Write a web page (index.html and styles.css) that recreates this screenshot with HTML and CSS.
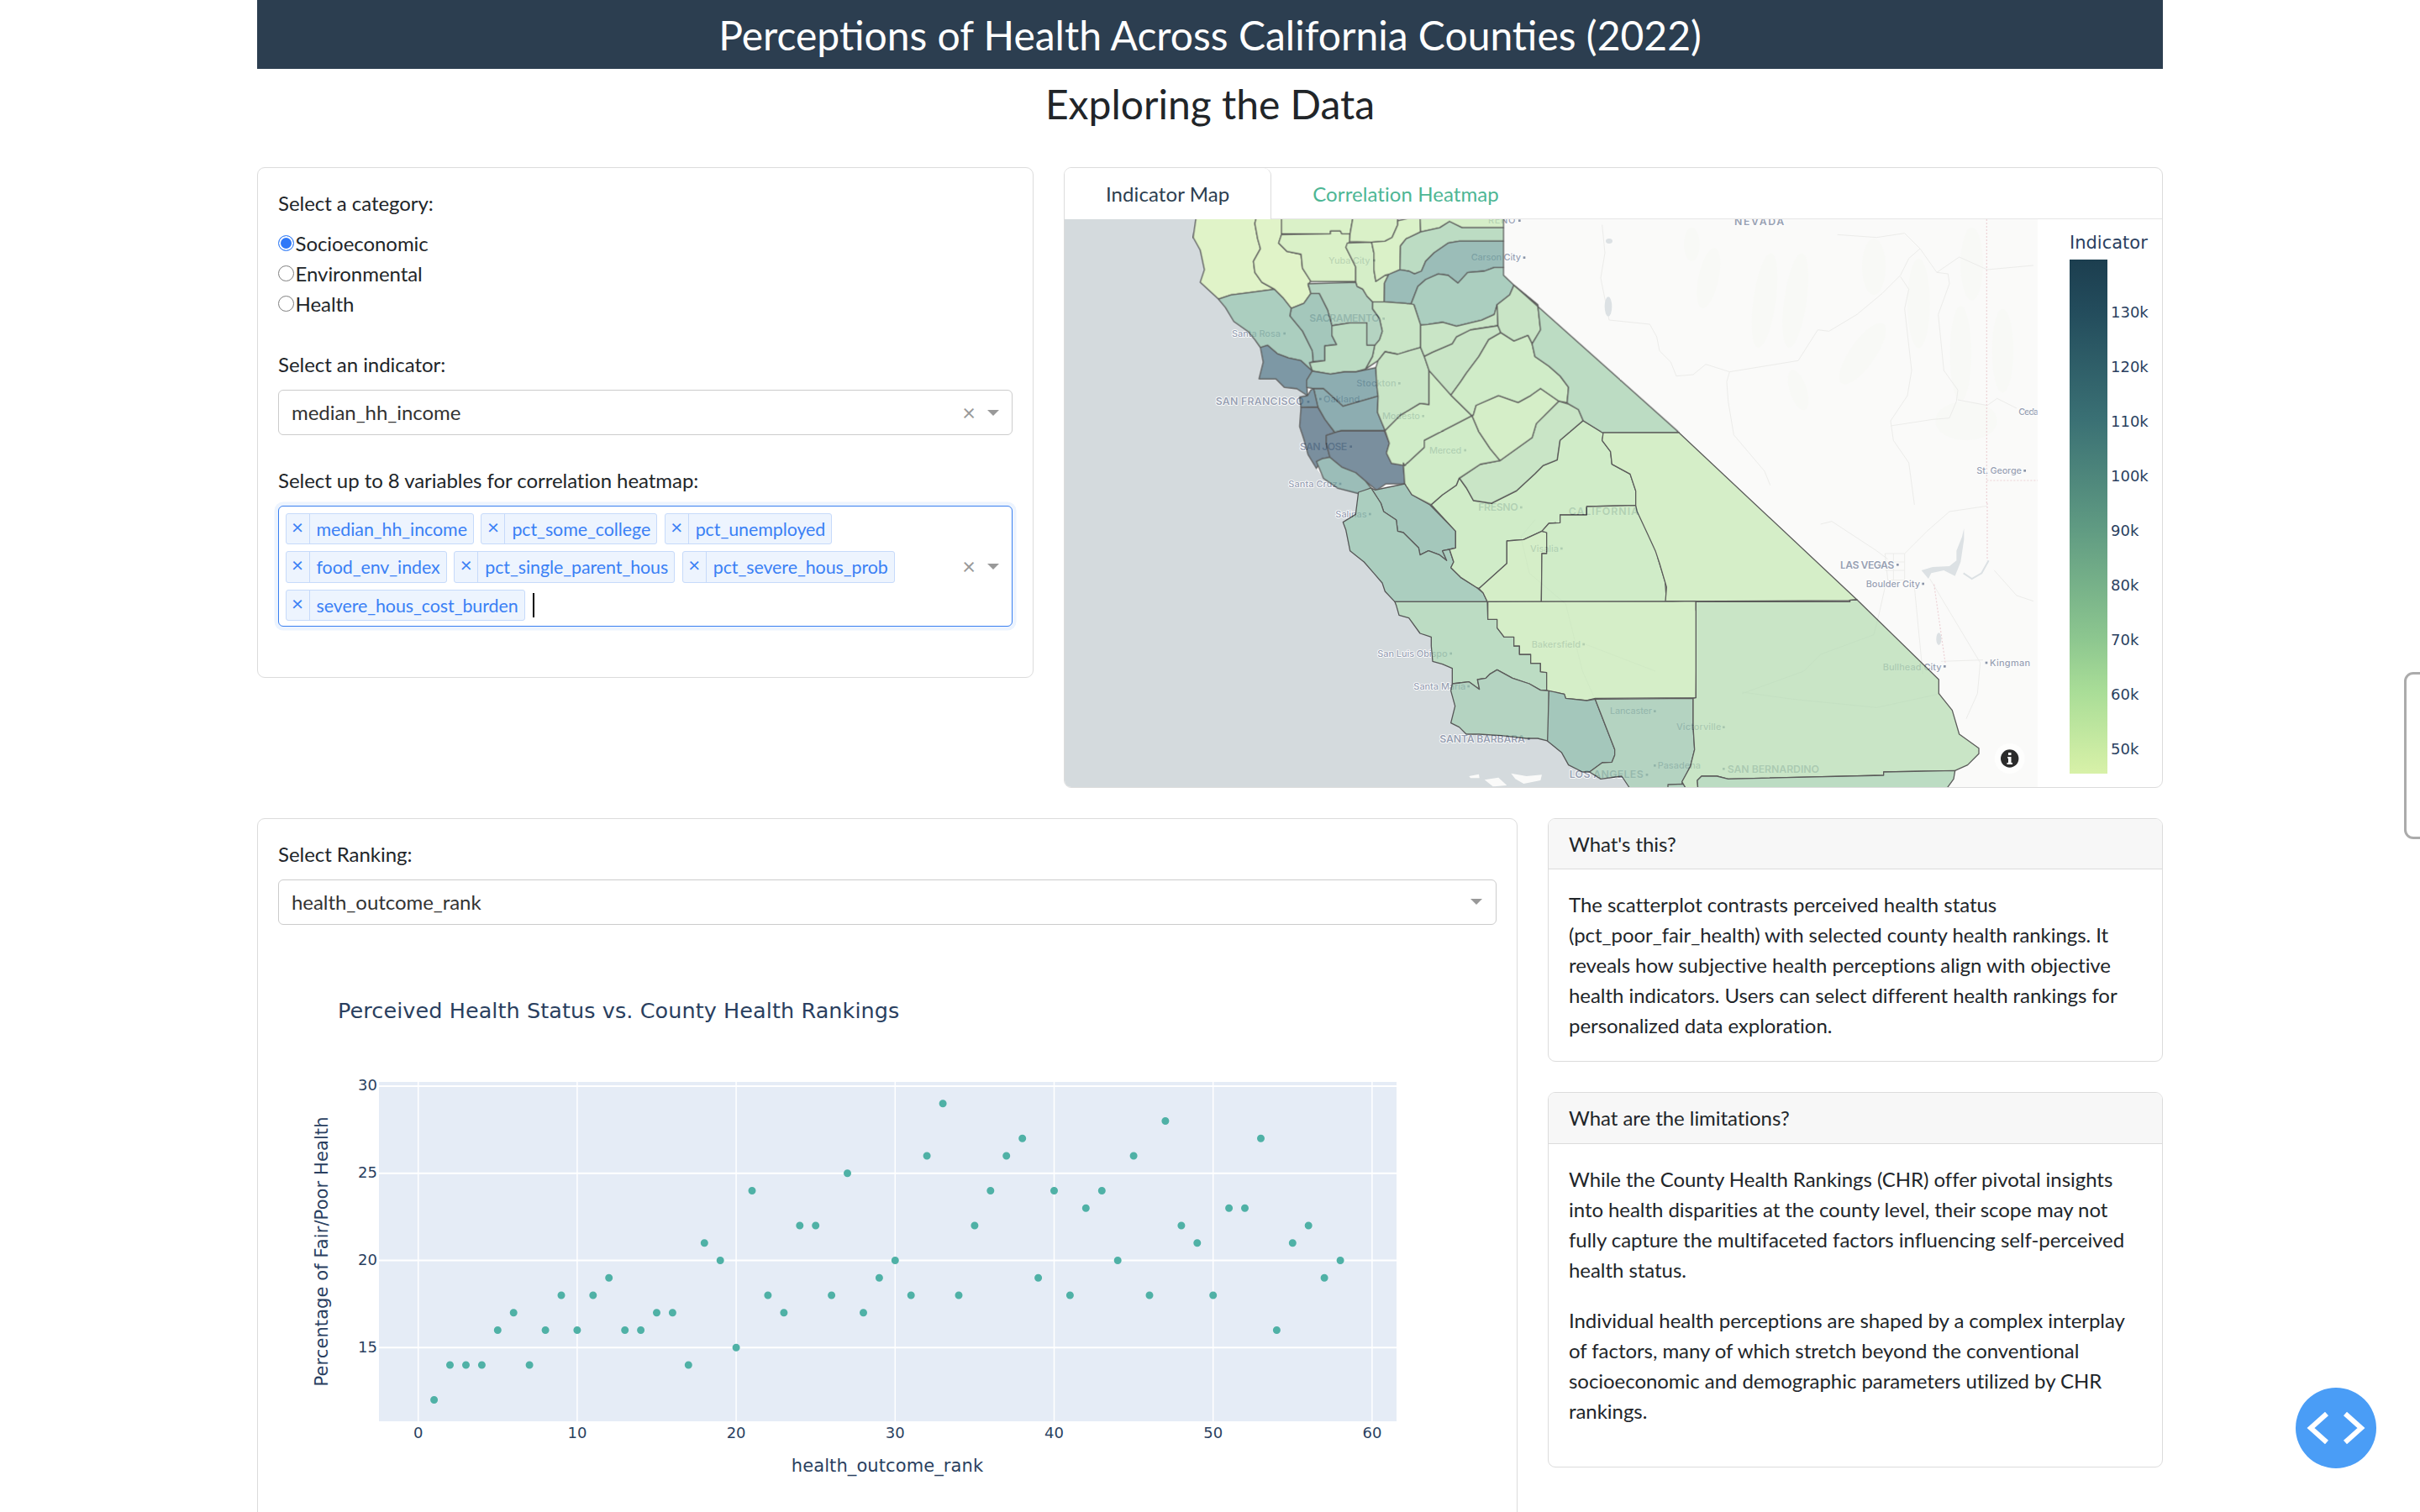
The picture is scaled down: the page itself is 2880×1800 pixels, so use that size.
FILE: index.html
```html
<!DOCTYPE html>
<html lang="en">
<head>
<meta charset="utf-8">
<title>Perceptions of Health Across California Counties (2022)</title>
<link rel="stylesheet" href="styles.css">
</head>
<body>
<div class="page">
  <header class="banner"><h1>Perceptions of Health Across California Counties (2022)</h1></header>
  <h2 class="subtitle">Exploring the Data</h2>

  <div class="row-top">
    <section class="card controls">
      <div class="group">
        <label class="field-label">Select a category:</label>
        <div class="radios">
          <label class="radio"><span class="dot on"></span>Socioeconomic</label>
          <label class="radio"><span class="dot"></span>Environmental</label>
          <label class="radio"><span class="dot"></span>Health</label>
        </div>
      </div>
      <div class="group">
        <label class="field-label">Select an indicator:</label>
        <div class="select">
          <span class="value">median_hh_income</span>
          <span class="clear">×</span><span class="caret-cell"><i class="caret"></i></span>
        </div>
      </div>
      <div class="group">
        <label class="field-label">Select up to 8 variables for correlation heatmap:</label>
        <div class="select multi">
          <div class="tags">
            <span class="tag"><b>×</b><em>median_hh_income</em></span>
            <span class="tag"><b>×</b><em>pct_some_college</em></span>
            <span class="tag"><b>×</b><em>pct_unemployed</em></span>
            <span class="tag"><b>×</b><em>food_env_index</em></span>
            <span class="tag"><b>×</b><em>pct_single_parent_hous</em></span>
            <span class="tag"><b>×</b><em>pct_severe_hous_prob</em></span>
            <span class="tag"><b>×</b><em>severe_hous_cost_burden</em></span>
            <span class="cursor"></span>
          </div>
          <span class="clear">×</span><span class="caret-cell"><i class="caret"></i></span>
        </div>
      </div>
    </section>

    <section class="card mapcard">
      <nav class="tabs">
        <span class="tab active">Indicator Map</span>
        <span class="tab">Correlation Heatmap</span>
      </nav>
      <div class="mapbody">
        <svg class="map" width="1158" height="676" viewBox="1267 262 1158 676">
          <rect class="ocean" x="1267" y="262" width="1158" height="676"/>
          <g transform="translate(1500 600) scale(.33333)">
            <polygon class="land" points="-230,-1019 -240,-949 -215,-904 -200,-834 -215,-789 -150,-729 -125,-699 -95,-649 -45,-614 -20,-584 0,-556 10,-504 -5,-444 55,-444 85,-414 130,-409 168,-384 140,-379 145,-342 140,-274 155,-229 170,-174 200,-124 225,-89 275,-54 350,-39 340,40 295,68 305,95 320,170 370,210 405,250 435,285 445,315 480,352 485,365 495,400 530,410 570,465 610,478 610,510 615,565 650,575 685,590 685,645 680,670 695,725 680,785 710,800 735,825 780,825 860,830 950,840 990,840 1025,850 1075,890 1100,935 1150,960 1175,960 1215,985 1290,975 1320,1020 2780,1020 2780,-1019"/>
          </g>

          <g transform="translate(1900 262) scale(.33333)" class="relief">
            <ellipse cx="400" cy="210" rx="36" ry="110" transform="rotate(12 400 210)"/>
            <ellipse cx="600" cy="290" rx="40" ry="170" transform="rotate(8 600 290)"/>
            <ellipse cx="710" cy="290" rx="40" ry="170" transform="rotate(8 710 290)"/>
            <ellipse cx="990" cy="170" rx="42" ry="100"/>
            <ellipse cx="950" cy="480" rx="45" ry="130" transform="rotate(35 950 480)"/>
            <ellipse cx="1150" cy="300" rx="40" ry="160"/>
            <ellipse cx="1340" cy="160" rx="40" ry="130"/>
            <ellipse cx="1450" cy="470" rx="38" ry="150"/>
            <ellipse cx="1300" cy="480" rx="38" ry="170"/>
            <ellipse cx="340" cy="90" rx="28" ry="60"/>
            <ellipse cx="720" cy="610" rx="30" ry="75" transform="rotate(-18 720 610)"/>
            <ellipse cx="1320" cy="720" rx="110" ry="70"/>
          </g>
          <g transform="translate(1900 262) scale(.33333)" class="roads">
            <path d="M20 20L30 120 15 210 45 360 190 375 215 420 225 470 265 510 285 560 345 555 390 518 475 545 720 505 790 395 830 400 930 340 1020 265 1085 200 1115 140 1155 105 1100 50 1000 65 860 55"/>
            <path d="M475 545L465 580 470 650 490 770 600 900 620 950"/>
            <path d="M1085 205L1115 250 1100 320 1125 540 1110 630 1050 720 1060 790 1115 870 1135 1020"/>
            <path d="M1155 105L1215 190 1255 195 1260 230 1220 340 1240 540 1290 610 1285 650 1260 710 1200 715 1050 738"/>
            <path d="M1290 645L1395 665 1430 640 1500 675M1215 190L1295 135 1395 180 1560 165"/>
          </g>
          <g transform="translate(1900 600) scale(.33333)" class="roads">
            <path d="M800 75L840 65 1000 170 1040 200M1100 180L1180 100 1260 30 1395 10M1030 300L1010 390 990 470 800 540 740 600 520 680M1190 270L1370 570 1360 680 1320 770M1135 300L1165 610M1230 565L1380 560M1230 680L1000 730 700 700 520 675M1420 240L1500 330 1560 350"/>
            <path d="M1030 180H1100V275H1040ZM1030 210H1100M1030 240H1100M1060 180V275"/>
          </g>
          <g transform="translate(1500 600) scale(.33333)" class="roads">
            <path d="M980 60L930 120 960 250 1090 360M1090 360L1150 600 1190 690M1150 500L1410 600"/>
          </g>
          <g transform="translate(1900 262) scale(.33333)">
            <path class="border" d="M1393 0V1020M1393 933H1575"/>
            <ellipse class="lake" cx="42" cy="312" rx="13" ry="35"/>
            <ellipse class="lake" cx="45" cy="78" rx="12" ry="9"/>
          </g>
          <g transform="translate(1900 600) scale(.33333)">
            <path class="border" d="M1395 0V205M1205 290L1245 570"/>
            <path class="lake" d="M1160 240L1200 228 1260 225 1285 205 1285 170 1305 120 1312 90 1312 130 1300 210 1280 260 1240 240 1195 250 1185 270Z"/>
            <path class="lake-line" d="M1310 250L1340 270 1375 250 1400 205"/>
            <ellipse class="lake" cx="1222" cy="485" rx="9" ry="22"/>
          </g>

          <g transform="translate(1500 600) scale(.33333)">
            <path class="island" d="M745 975L780 968 782 982 750 982Z"/>
            <path class="island" d="M800 988L850 980 880 1008 830 1012Z"/>
            <path class="island" d="M895 965L950 975 1005 970 1000 990 940 1002 910 985Z"/>
          </g>

          <g transform="translate(1400 262) scale(.33333)" class="labels">
            <text x="543" y="159" textLength="149">Yuba City</text><rect x="703" y="143" width="8" height="8"/>
            <text x="1052" y="148" textLength="178">Carson City</text><rect x="1238" y="133" width="8" height="8"/>
            <text x="1113" y="15" textLength="97">RENO</text><rect x="1221" y="1" width="8" height="8"/>
            <text x="475" y="367" textLength="250" class="big">SACRAMENTO</text><rect x="736" y="351" width="8" height="8"/>
            <text x="198" y="419" textLength="174">Santa Rosa</text><rect x="382" y="404" width="8" height="8"/>
            <text x="140" y="664" textLength="315" class="big">SAN FRANCISCO</text><rect x="467" y="648" width="8" height="8"/>
            <rect x="510" y="638" width="8" height="8"/><text x="525" y="653" textLength="130">Oakland</text>
            <text x="643" y="597" textLength="142">Stockton</text><rect x="792" y="582" width="8" height="8"/>
            <text x="735" y="714" textLength="135">Modesto</text><rect x="877" y="699" width="8" height="8"/>
            <text x="903" y="836" textLength="115">Merced</text><rect x="1027" y="821" width="8" height="8"/>
            <text x="440" y="825" textLength="170" class="big">SAN JOSE</text><rect x="619" y="808" width="8" height="8"/>
            <text x="400" y="956" textLength="175">Santa Cruz</text><rect x="581" y="941" width="8" height="8"/>
          </g>
          <g transform="translate(1500 600) scale(.33333)" class="labels">
            <text x="268" y="50" textLength="112">Salinas</text><rect x="387" y="35" width="8" height="8"/>
            <text x="778" y="26" textLength="142" class="big">FRESNO</text><rect x="927" y="11" width="8" height="8"/>
            <text x="1100" y="43" textLength="250" class="big">CALIFORNIA</text>
            <text x="963" y="173" textLength="102">Visalia</text><rect x="1071" y="158" width="8" height="8"/>
            <text x="968" y="516" textLength="175">Bakersfield</text><rect x="1150" y="500" width="8" height="8"/>
            <text x="418" y="548" textLength="250">San Luis Obispo</text><rect x="676" y="533" width="8" height="8"/>
            <text x="547" y="665" textLength="186">Santa Maria</text><rect x="739" y="650" width="8" height="8"/>
            <text x="640" y="854" textLength="305" class="big">SANTA BARBARA</text><rect x="954" y="838" width="8" height="8"/>
            <text x="1103" y="982" textLength="264" class="big">LOS ANGELES</text><rect x="1376" y="966" width="8" height="8"/>
            <text x="1248" y="754" textLength="150">Lancaster</text><rect x="1404" y="739" width="8" height="8"/>
          </g>
          <g transform="translate(1900 600) scale(.33333)" class="labels">
            <text x="285" y="811" textLength="160">Victorville</text><rect x="450" y="796" width="8" height="8"/>
            <rect x="204" y="933" width="8" height="8"/><text x="218" y="948" textLength="154">Pasadena</text>
            <rect x="450" y="945" width="8" height="8"/><text x="467" y="963" textLength="328" class="big">SAN BERNARDINO</text>
            <text x="870" y="233" textLength="193" class="big">LAS VEGAS</text><rect x="1071" y="216" width="8" height="8"/>
            <text x="962" y="301" textLength="193">Boulder City</text><rect x="1162" y="284" width="8" height="8"/>
            <text x="1022" y="596" textLength="210">Bullhead City</text><rect x="1239" y="579" width="8" height="8"/>
            <rect x="1388" y="566" width="8" height="8"/><text x="1404" y="582" textLength="144">Kingman</text>
          </g>
          <g transform="translate(1900 262) scale(.33333)" class="labels">
            <text x="492" y="20" textLength="178" class="big">NEVADA</text>
            <text x="1357" y="909" textLength="161">St. George</text><rect x="1525" y="894" width="8" height="8"/>
            <text x="1507" y="700" textLength="80">Cedar</text>
          </g>

          <g class="counties">
            <g transform="translate(1400 262) scale(.33333)">
              <polygon class="a" points="70,-5 60,65 85,110 100,180 85,225 150,285 195,270 260,262 350,250 305,225 280,190 275,150 300,105 290,70 280,15 285,-5"/>
              <polygon class="a" points="285,-5 280,15 290,70 300,105 275,150 280,190 305,225 350,250 380,280 410,318 455,300 480,265 470,235 480,220 450,175 445,125 395,115 365,85 375,55 375,-5"/>
              <polygon class="b" points="375,-5 375,52 550,52 550,42 585,42 590,52 620,52 630,-5"/>
              <polygon class="b" points="375,55 550,52 550,42 585,42 590,52 620,52 618,80 605,100 640,170 640,222 480,222 450,175 445,125 395,115 365,85"/>
              <polygon class="b" points="630,-5 620,52 618,80 697,82 745,78 770,65 790,20 790,-5"/>
              <polygon class="c" points="610,85 697,82 705,120 705,180 712,222 745,200 758,197 743,228 742,295 700,295 680,275 665,250 645,240 640,222 640,170 605,100"/>
              <polygon class="b" points="697,82 745,78 770,65 790,20 790,5 835,-5 870,-5 872,45 820,70 800,95 798,180 758,197 745,200 712,222 705,180 705,120"/>
              <polygon class="c" points="870,-5 872,45 940,30 975,8 1020,30 1168,30 1168,-5"/>
              <polygon class="f" points="800,95 820,70 872,45 940,30 975,8 1020,30 1168,30 1168,78 1010,78 970,85 920,120 890,150 875,185 850,195 830,185 798,180"/>
              <polygon class="j" points="1168,78 1010,78 970,85 920,120 890,150 875,185 850,195 830,185 798,180 758,197 743,228 742,295 838,302 862,240 890,215 935,195 970,200 1005,228 1040,190 1100,185 1135,172 1168,172"/>
              <polygon class="h" points="838,302 862,240 890,215 935,195 970,200 1005,228 1040,190 1100,185 1135,172 1168,172 1168,200 1205,235 1190,270 1145,305 1135,340 1090,360 1000,382 950,368 900,375 872,378 848,305"/>
              <polygon class="e" points="700,295 742,295 838,302 848,305 872,378 872,458 830,470 790,482 745,473 720,505 675,535 700,490 708,450 725,430 735,400 725,355 700,320"/>
              <polygon class="g" points="470,230 640,225 645,240 665,250 680,275 700,295 700,320 725,355 735,400 725,430 708,450 680,450 680,370 620,370 555,380 540,325 510,265 480,265"/>
              <polygon class="i" points="410,318 455,300 480,265 510,265 540,325 555,380 555,415 572,448 530,452 530,505 488,508 485,470 450,400 405,345"/>
              <polygon class="f" points="555,380 620,370 680,370 680,450 708,450 700,490 675,535 640,545 600,545 550,553 485,542 475,512 530,505 530,452 572,448 555,415"/>
              <polygon class="h" points="150,285 195,270 260,262 350,250 380,280 410,318 405,345 450,400 485,470 488,508 475,512 485,542 445,505 400,495 360,480 325,450 300,458 280,430 255,400 205,365 175,315"/>
              <polygon class="l" points="300,458 325,450 360,480 400,495 445,505 485,542 465,575 468,630 430,605 385,600 355,570 295,570 310,510"/>
              <polygon class="k" points="485,542 550,553 600,545 640,545 712,530 715,590 720,632 595,668 525,605 490,605 465,600 465,575"/>
              <polygon class="k" points="490,605 525,605 595,668 720,632 718,690 745,755 590,755 565,760 530,715 505,670"/>
              <polygon class="l" points="440,635 468,630 480,610 490,605 505,670 445,672"/>
              <polygon class="m" points="445,672 505,672 530,715 565,762 535,772 535,800 548,850 520,855 500,890 470,840 455,785 440,740"/>
              <polygon class="m" points="535,772 565,762 590,755 742,755 760,800 750,835 768,872 810,870 815,945 748,945 715,968 675,935 640,905 590,885 548,850 535,800"/>
              <polygon class="j" points="500,865 520,855 548,850 590,885 640,905 675,935 695,960 650,980 575,960 525,925"/>
              <polygon class="e" points="745,473 790,482 830,470 872,458 885,490 902,540 902,662 870,658 800,700 745,755 718,690 720,632 715,590 712,530 720,505"/>
              <polygon class="d" points="745,755 800,700 870,658 902,662 902,540 980,628 1055,702 885,790 885,815 815,880 768,872 750,835 760,800"/>
              <polygon class="e" points="872,378 900,375 950,368 1000,382 1090,360 1135,340 1145,305 1148,380 1050,395 1000,420 985,445 915,475 885,490 872,458"/>
              <polygon class="e" points="885,490 915,475 985,445 1000,420 1050,395 1148,380 1158,405 1115,430 1080,490 1035,550 1015,580 980,628 902,540"/>
              <polygon class="e" points="1145,305 1190,270 1205,235 1290,305 1300,395 1270,445 1255,415 1205,435 1158,405 1148,380"/>
              <polygon class="d" points="980,628 1015,580 1035,550 1080,490 1115,430 1158,405 1205,435 1255,415 1270,445 1280,490 1330,525 1370,560 1400,600 1395,655 1365,650 1300,605 1265,630 1220,655 1150,630 1070,665 1060,700 1055,702"/>
              <polygon class="f" points="1205,235 1795,762 1525,765 1500,750 1452,720 1435,680 1400,660 1395,655 1400,600 1370,560 1330,525 1280,490 1270,445 1300,395 1290,305"/>
              <polygon class="e" points="1155,862 1270,780 1285,730 1365,650 1400,660 1435,680 1452,720 1370,790 1360,860 1310,880 1280,910 1215,970 1125,1015 1060,1005 1035,960 1010,925 1085,875"/>
              <polygon class="c" points="1055,702 1060,700 1070,665 1150,630 1220,655 1265,630 1300,605 1365,650 1285,730 1270,780 1155,862 1120,820 1080,760"/>
              <polygon class="d" points="885,790 1055,702 1080,760 1120,820 1155,862 1085,875 1010,925 1000,950 950,985 910,1020 840,985 815,945 810,870 815,880 885,815"/>
            </g>
            <g transform="translate(1500 600) scale(.33333)">
              <polygon class="i" points="395,-54 410,-47 443,-54 515,-69 540,-30 605,6 697,100 697,160 675,165 650,170 665,205 640,185 600,170 570,185 565,160 510,105 490,100 485,60 440,30 430,0"/>
              <polygon class="h" points="350,-39 395,-54 430,0 440,30 485,60 490,100 510,105 565,160 570,185 600,170 640,185 665,205 650,170 675,165 690,210 680,230 715,265 770,300 795,320 810,352 480,352 445,315 435,285 405,250 370,210 320,170 305,95 295,68 340,40"/>
              <polygon class="d" points="610,6 650,-29 700,-64 710,-89 735,-54 760,-9 825,1 915,-44 980,-104 1010,-134 1060,-154 1070,-224 1152,-294 1225,-249 1220,-224 1250,-184 1255,-139 1320,-104 1340,-44 1340,8 1165,12 1165,42 1070,42 1070,70 1030,72 1005,100 940,130 880,135 880,215 780,305 770,300 715,265 680,230 690,210 675,165 697,160 697,100"/>
              <polygon class="c" points="780,305 880,215 880,135 940,130 1005,100 1022,105 1022,180 1005,180 1003,352 810,352 795,320"/>
              <polygon class="d" points="1005,100 1030,72 1070,70 1070,42 1165,42 1165,12 1340,8 1355,45 1380,95 1410,150 1420,200 1445,280 1450,352 1003,352 1005,180 1022,180 1022,105"/>
              <polygon class="c" points="1224,-252 1494,-252 2130,345 2100,348 1472,351 1446,351 1450,300 1425,215 1410,170 1380,105 1345,30 1340,8 1340,-44 1320,-104 1255,-139 1250,-184 1220,-224"/>
              <polygon class="f" points="480,352 810,352 812,415 845,415 845,445 870,478 905,478 905,510 925,510 925,540 965,540 965,572 1000,572 1000,602 1022,605 1022,668 1000,668 960,645 900,625 845,595 820,610 805,625 775,630 782,665 745,638 685,645 685,590 650,575 615,565 610,510 610,478 570,465 530,410 495,400 485,365"/>
              <polygon class="c" points="812,352 1472,351 1555,350 1555,380 1558,400 1555,695 1195,697 1165,705 1090,697 1085,682 1030,672 1022,668 1022,605 1000,602 1000,572 965,572 965,540 925,540 925,510 905,510 905,478 870,478 845,445 845,415 812,415"/>
              <polygon class="g" points="685,645 745,638 782,665 775,630 805,625 820,610 845,595 900,625 960,645 1000,668 1030,670 1030,850 990,840 950,840 860,830 780,825 735,825 710,800 680,785 695,725 680,670"/>
              <polygon class="i" points="1030,670 1085,682 1090,697 1165,705 1195,700 1265,880 1265,900 1255,925 1220,927 1175,960 1150,960 1100,935 1075,890 1025,850"/>
              <polygon class="g" points="1195,700 1545,697 1545,800 1550,880 1535,940 1515,980 1505,1000 1515,1020 1320,1020 1290,975 1215,985 1175,960 1220,927 1255,925 1265,900 1265,880"/>
            </g>
            <g transform="translate(1900 600) scale(.33333)">
              <polygon class="g" points="255,1020 255,1005 310,1003 320,1020"/>
              <polygon class="e" points="355,352 905,352 905,346 930,345 1222,630 1222,680 1270,740 1295,825 1365,875 1365,895 1325,935 1280,955 1025,960 1025,972 470,985 430,975 375,975 360,990 362,1020 320,1020 305,995 335,940 350,880 345,800 345,697 355,695"/>
              <polygon class="f" points="375,975 430,975 470,985 1025,972 1025,960 1280,955 1275,985 1250,1020 362,1020 360,990"/>
            </g>
          </g>

          <circle class="info-halo" cx="2391.7" cy="904" r="18"/>
          <circle class="info-disc" cx="2391.7" cy="904" r="10.7"/>
          <path class="info-mark" d="M2390 897h3.5v3h-3.5zM2389 902h4.5v7h1.5v2h-6.5v-2h1.5v-5h-.5z"/>
        </svg>
        <svg class="legend" width="148" height="676" viewBox="2425 262 148 676">
          <defs>
            <linearGradient id="scale" x1="0" y1="0" x2="0" y2="1">
              <stop offset="0" stop-color="#1c3e4f"/>
              <stop offset=".1" stop-color="#234c5c"/>
              <stop offset=".31" stop-color="#3a7074"/>
              <stop offset=".52" stop-color="#5f9a82"/>
              <stop offset=".735" stop-color="#8cc68f"/>
              <stop offset=".84" stop-color="#a9dd97"/>
              <stop offset="1" stop-color="#d8f1a8"/>
            </linearGradient>
          </defs>
          <text class="legend-title" x="2463" y="297">Indicator</text>
          <rect x="2463" y="310" width="45" height="612" fill="url(#scale)"/>
          <g class="legend-ticks">
            <text x="2512" y="378.5">130k</text>
            <text x="2512" y="443.5">120k</text>
            <text x="2512" y="508.5">110k</text>
            <text x="2512" y="573.5">100k</text>
            <text x="2512" y="638.5">90k</text>
            <text x="2512" y="703.5">80k</text>
            <text x="2512" y="768.5">70k</text>
            <text x="2512" y="833.5">60k</text>
            <text x="2512" y="898.5">50k</text>
          </g>
        </svg>
      </div>
    </section>
  </div>

  <div class="row-bottom">
    <section class="card chartcard">
      <label class="field-label">Select Ranking:</label>
      <div class="select">
        <span class="value">health_outcome_rank</span>
        <span class="caret-cell"><i class="caret"></i></span>
      </div>
      <svg class="chart" width="1449" height="720" viewBox="331 1100 1449 720">
        <text class="chart-title" x="402" y="1211">Perceived Health Status vs. County Health Rankings</text>
        <rect class="plot" x="451" y="1287" width="1211" height="404"/>
        <path class="grid-minor" d="M497.7 1287V1691M686.9 1287V1691M876.1 1287V1691M1065.3 1287V1691M1254.5 1287V1691M1443.7 1287V1691M1632.9 1287V1691"/>
        <path class="grid-major" d="M451 1292H1662M451 1395.8H1662M451 1499.5H1662M451 1603.3H1662"/>
        <path class="points" d="M516.6 1665.5h0M535.5 1624h0M554.5 1624h0M573.4 1624h0M592.3 1582.5h0M611.2 1561.75h0M630.1 1624h0M649.1 1582.5h0M668 1541h0M686.9 1582.5h0M705.8 1541h0M724.7 1520.25h0M743.7 1582.5h0M762.6 1582.5h0M781.5 1561.75h0M800.4 1561.75h0M819.3 1624h0M838.3 1478.75h0M857.2 1499.5h0M876.1 1603.25h0M895 1416.5h0M913.9 1541h0M932.9 1561.75h0M951.8 1458h0M970.7 1458h0M989.6 1541h0M1008.5 1395.75h0M1027.5 1561.75h0M1046.4 1520.25h0M1065.3 1499.5h0M1084.2 1541h0M1103.1 1375h0M1122.1 1312.75h0M1141 1541h0M1159.9 1458h0M1178.8 1416.5h0M1197.7 1375h0M1216.7 1354.25h0M1235.6 1520.25h0M1254.5 1416.5h0M1273.4 1541h0M1292.3 1437.25h0M1311.3 1416.5h0M1330.2 1499.5h0M1349.1 1375h0M1368 1541h0M1386.9 1333.5h0M1405.9 1458h0M1424.8 1478.75h0M1443.7 1541h0M1462.6 1437.25h0M1481.5 1437.25h0M1500.5 1354.25h0M1519.4 1582.5h0M1538.3 1478.75h0M1557.2 1458h0M1576.1 1520.25h0M1595.1 1499.5h0"/>
        <g class="ticks">
          <text class="end" x="449" y="1297">30</text>
          <text class="end" x="449" y="1401">25</text>
          <text class="end" x="449" y="1505">20</text>
          <text class="end" x="449" y="1609">15</text>
          <text class="mid" x="497.7" y="1711">0</text>
          <text class="mid" x="686.9" y="1711">10</text>
          <text class="mid" x="876.1" y="1711">20</text>
          <text class="mid" x="1065.3" y="1711">30</text>
          <text class="mid" x="1254.5" y="1711">40</text>
          <text class="mid" x="1443.7" y="1711">50</text>
          <text class="mid" x="1632.9" y="1711">60</text>
        </g>
        <text class="axis-title mid" x="1056" y="1751">health_outcome_rank</text>
        <text class="axis-title mid" x="0" y="0" transform="translate(390 1489) rotate(-90)">Percentage of Fair/Poor Health</text>
      </svg>
    </section>

    <aside class="notes">
      <section class="card note">
        <header class="note-head">What's this?</header>
        <div class="note-body">
          <p class="flush">The scatterplot contrasts perceived health status (pct_poor_fair_health) with selected county health rankings. It reveals how subjective health perceptions align with objective health indicators. Users can select different health rankings for personalized data exploration.</p>
        </div>
      </section>
      <section class="card note">
        <header class="note-head">What are the limitations?</header>
        <div class="note-body">
          <p>While the County Health Rankings (CHR) offer pivotal insights into health disparities at the county level, their scope may not fully capture the multifaceted factors influencing self-perceived health status.</p>
          <p>Individual health perceptions are shaped by a complex interplay of factors, many of which stretch beyond the conventional socioeconomic and demographic parameters utilized by CHR rankings.</p>
        </div>
      </section>
    </aside>
  </div>
</div>

<div class="edge-tab"></div>
<button class="fab" aria-label="Toggle code">
  <svg width="96" height="96" viewBox="0 0 96 96"><path d="M37 31L18 48 37 65M59 31L78 48 59 65"/></svg>
</button>
</body>
</html>
```

FILE: styles.css
```css
* { box-sizing: border-box; }
html, body { margin: 0; height: 100%; overflow: hidden; }
body { background: #fff; color: #212529; font: 24px/36px Lato, "Open Sans", sans-serif; letter-spacing: -.05px; }

.page { width: 2268px; margin: 0 auto; }

.banner { background: #2c3e50; height: 82px; display: flex; align-items: center; justify-content: center; }
.banner h1 { margin: 0; color: #fff; font-size: 48px; line-height: 81px; font-weight: 400; letter-spacing: 0; }
.subtitle { margin: 13px 0 46px; text-align: center; font-size: 48px; line-height: 58px; font-weight: 400; letter-spacing: 0; }

.card { background: #fff; border: 1.5px solid #dcdcdc; border-radius: 9px; }

.row-top { display: flex; align-items: flex-start; gap: 36px; }
.row-bottom { display: flex; align-items: flex-start; gap: 36px; margin-top: 35.5px; }

.controls { width: 924px; padding: 24px 24px 24px; }
.group { margin-bottom: 36px; }
.field-label { display: block; margin-bottom: 12px; }
.radios { display: flex; flex-direction: column; }
.radio { display: flex; align-items: center; height: 36px; }
.dot { width: 19px; height: 19px; margin-right: 1.5px; border: 1.5px solid #808080; border-radius: 50%; background: #fff; flex: none; position: relative; top: -1px; }
.dot.on { border-color: #3b82f6; background: #2f78f8; box-shadow: inset 0 0 0 2px #fff; }

.select { display: flex; align-items: center; height: 54px; border: 1.5px solid #ccc; border-radius: 6px; background: #fff; color: #333; }
.value { flex: 1; padding-left: 15px; }
.clear { width: 28px; text-align: center; color: #999; font-size: 27px; line-height: 30px; flex: none; }
.caret-cell { width: 37px; padding-right: 8px; display: flex; justify-content: center; flex: none; }
.caret { width: 0; height: 0; border-style: solid; border-width: 7.5px 7.5px 0; border-color: #999 transparent transparent; }

.multi { height: 144px; border-color: #3a80f0; box-shadow: 0 0 0 4.5px #edf4fe; align-items: center; }
.tags { flex: 1; display: flex; flex-wrap: wrap; align-items: center; gap: 8px 8.5px; padding: 1.5px 0 0 7.5px; }
.tag { display: flex; height: 37.5px; background: #edf4fe; border: 1.5px solid #c6dafa; border-radius: 3px; color: #3a80f5; font-size: 21.4px; line-height: 36px; }
.tag b { width: 28px; text-align: center; font-weight: 400; font-size: 24px; line-height: 30px; border-right: 1.5px solid #c6dafa; }
.tag em { font-style: normal; padding: 0 7px 0 8px; }
.cursor { width: 2px; height: 29px; background: #000; margin-left: 1px; }

.mapcard { width: 1308px; height: 739px; overflow: hidden; }
.tabs { display: flex; height: 61px; border-bottom: 1.5px solid #e6e6e6; }
.tab { padding: 12.5px 49px; color: #4db694; letter-spacing: .08px; }
.tab.active { color: #2c3e50; background: #fff; border-right: 1.5px solid #dcdcdc; border-bottom: 1.5px solid #fff; height: 62px; border-radius: 0 9px 0 0; }
.mapbody { display: flex; height: 677px; }
.map, .legend { display: block; flex: none; }

.ocean { fill: #d4dadd; }
.land { fill: #fafaf9; }
.relief ellipse { fill: #f8f9f6; }
.roads path { fill: none; stroke: #ececea; stroke-width: 1; vector-effect: non-scaling-stroke; }
.border { fill: none; stroke: #ecd2d6; stroke-width: 1.2; stroke-dasharray: 2 2; vector-effect: non-scaling-stroke; }
.lake { fill: #dce1e4; }
.lake-line { fill: none; stroke: #dce1e4; stroke-width: 2; vector-effect: non-scaling-stroke; }
.island { fill: #fafaf9; }
.labels text { font-family: Inter, "Open Sans", sans-serif; font-size: 33px; font-weight: 500; fill: #98a1b3; stroke: #fff; stroke-width: 5px; stroke-linejoin: round; paint-order: stroke; letter-spacing: 0; }
.labels text.big { font-size: 37px; font-weight: 600; }
.labels rect { fill: #8a94a8; }
.counties { opacity: .7; }
.counties polygon { stroke: #161616; stroke-width: 1.3; stroke-linejoin: round; vector-effect: non-scaling-stroke; }
.counties .a { fill: #d5f0b4; }
.counties .b { fill: #ccecb3; }
.counties .c { fill: #c5e9b4; }
.counties .d { fill: #bde5b3; }
.counties .e { fill: #b3dcb0; }
.counties .f { fill: #a1cfad; }
.counties .g { fill: #95c2a9; }
.counties .h { fill: #88baa7; }
.counties .i { fill: #7eb0a1; }
.counties .j { fill: #72a39d; }
.counties .k { fill: #5e8c92; }
.counties .l { fill: #476e81; }
.counties .m { fill: #436078; }
.info-halo { fill: #fff; opacity: .7; }
.info-disc { fill: #2b2b2b; }
.info-mark { fill: #fff; }
.legend-title { font: 21px "DejaVu Sans", sans-serif; fill: #2a3f5f; letter-spacing: 0; }
.legend-ticks text { font: 18px "DejaVu Sans", sans-serif; fill: #2a3f5f; letter-spacing: 0; }

.chartcard { width: 1500px; height: 1000px; padding: 24px; }
.chartcard .select { height: 54px; }
.chartcard .caret-cell { width: 46px; padding-right: 0; }
.chart { display: block; }
.chart-title { font: 25.5px "DejaVu Sans", sans-serif; fill: #2a3f5f; letter-spacing: .07px; }
.plot { fill: #e5ecf6; }
.grid-major { stroke: #fff; stroke-width: 2; fill: none; }
.grid-minor { stroke: #fff; stroke-width: 1.5; fill: none; }
.points { stroke: #4fb1a6; stroke-width: 9; stroke-linecap: round; fill: none; }
.ticks text { font: 18px "DejaVu Sans", sans-serif; fill: #2a3f5f; letter-spacing: 0; }
.end { text-anchor: end; }
.mid { text-anchor: middle; }
.axis-title { font: 21px "DejaVu Sans", sans-serif; fill: #2a3f5f; letter-spacing: .1px; }

.notes { width: 732px; display: flex; flex-direction: column; gap: 36px; }
.note-head { background: #f7f7f7; border-bottom: 1.5px solid #dcdcdc; border-radius: 7.5px 7.5px 0 0; height: 60.5px; padding: 12px 24px; }
.note-body { padding: 24px; }
.note-body p { margin: 0 0 24px; }
.note-body p.flush { margin: 0; }

.edge-tab { position: fixed; left: 2861px; top: 800px; width: 30px; height: 199px; border: 3px solid #ababab; border-radius: 11px 0 0 11px; background: #fff; }
.fab { position: fixed; left: 2732px; top: 1652px; width: 96px; height: 96px; padding: 0; border: 0; border-radius: 50%; background: #4a9df6; }
.fab svg { display: block; }
.fab path { fill: none; stroke: #fff; stroke-width: 6; }
```
